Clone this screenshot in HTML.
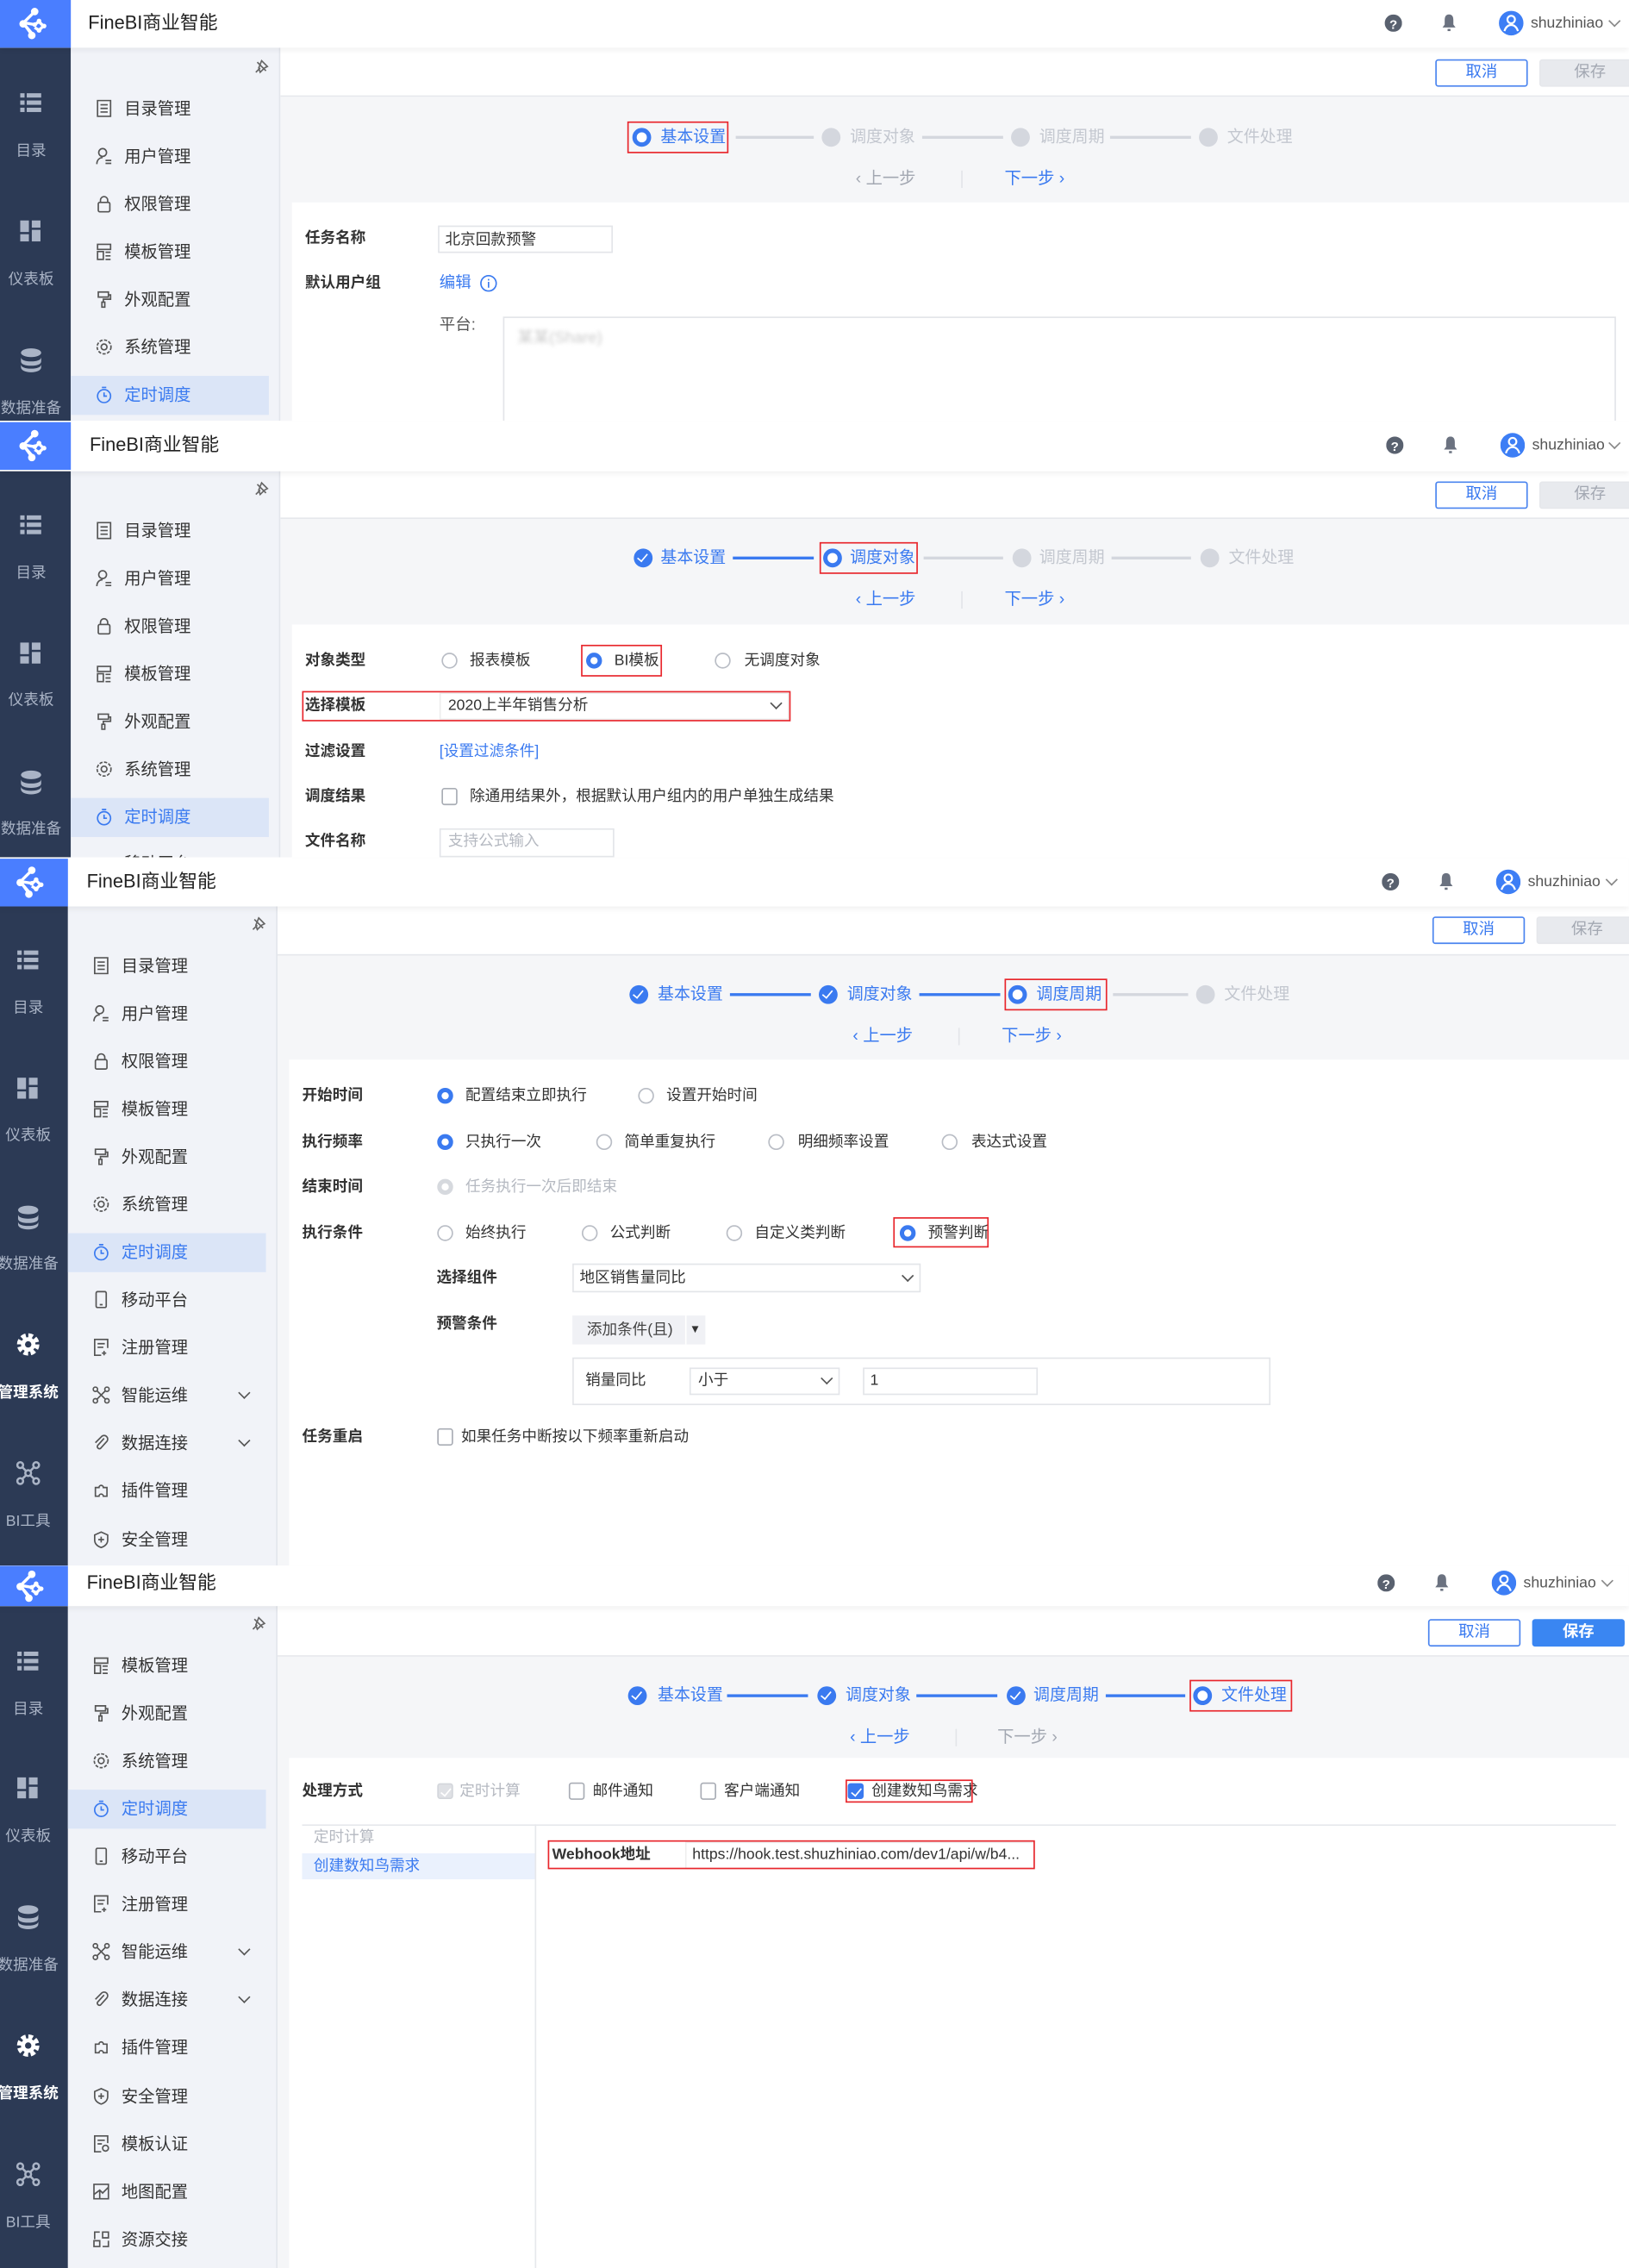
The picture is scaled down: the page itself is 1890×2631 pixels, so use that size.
<!DOCTYPE html>
<html><head><meta charset="utf-8">
<style>
*{margin:0;padding:0;box-sizing:border-box}
html,body{width:1890px;height:2630px;overflow:hidden;background:#fff}
body{font-family:"Liberation Sans","Noto Sans CJK SC",sans-serif;color:#333}
#w{position:absolute;left:0;top:0;width:1127px;height:1569px;transform:scale(1.677);transform-origin:0 0}
.p{position:absolute;left:0;width:1127px;overflow:hidden;background:#fff}
.in{position:absolute;left:0;top:0;width:1129px;height:100%}
.a{position:absolute}
.t{position:absolute;white-space:nowrap;font-size:11px;line-height:14px;transform:translateY(-50%)}
.ttl{font-size:13px !important}
.hd{position:absolute;left:0;top:0;width:100%;background:#fff;box-shadow:0 2px 4px rgba(0,0,0,.06);z-index:2}
.logo{position:absolute;left:0;top:0;width:49px;background:#4a7eff}
.dk{position:absolute;left:0;width:49px;bottom:0;background:#2c3a55}
.mn{position:absolute;left:49px;width:145px;bottom:0;background:#f1f3f8;border-right:1px solid #e3e6ec}
.tb{position:absolute;left:194px;right:0;background:#fff;border-bottom:1px solid #e6e8ec}
.sa{position:absolute;left:194px;right:0;bottom:0;background:#f5f6f8}
.fm{position:absolute;left:202px;right:0;bottom:0;background:#fff}
.dl{position:absolute;left:0;width:43px;text-align:center;font-size:10.5px;color:#aab4c6;transform:translateY(-50%);white-space:nowrap}
.dl.w{color:#fff;font-weight:bold}
.di{position:absolute;left:11.5px;width:19px;height:19px;transform:translateY(-50%)}
.mt{position:absolute;left:86px;font-size:11.5px;color:#333;transform:translateY(-50%);white-space:nowrap}
.mt.on{color:#3a7af0}
.mic{position:absolute;left:66px;width:12px;height:12px;transform:translateY(-50%)}
.act{position:absolute;left:49px;width:137px;height:27px;background:#dbe5f7}
.btn{position:absolute;height:19px;border:1px solid #4a84ef;color:#3a7af0;font-size:11px;text-align:center;line-height:17px;border-radius:2px}
.btn.g{border-color:#e5e7eb;background:#e8eaee;color:#a3a8b2}
.btn.b{background:#3a86f2;border-color:#3a86f2;color:#fff;font-weight:bold}
.sc{position:absolute;width:13px;height:13px;border-radius:50%;transform:translate(-50%,-50%)}
.sc.g{background:#d4d7de}
.sc.o{border:3.5px solid #3a7af0;background:#fff}
.sc.d{background:#3a7af0}
.sc.d:after{content:"";position:absolute;left:4px;top:2px;width:3px;height:6px;border:solid #fff;border-width:0 1.6px 1.6px 0;transform:rotate(40deg)}
.st{font-size:11.3px;color:#c3c7cf}
.st.b{color:#3a7af0}
.ln{position:absolute;height:2px;background:#d4d7de;transform:translateY(-50%)}
.ln.b{background:#3a7af0}
.nv{font-size:11.5px;color:#a3a8b2}
.nv.b{color:#3a7af0}
.sep{position:absolute;width:1px;height:12px;background:#e3e5e9;transform:translateY(-50%)}
.rb{position:absolute;border:1.5px solid #e8262c}
.lb{font-weight:bold;color:#333;font-size:10.5px}
.r{position:absolute;width:11px;height:11px;border:1px solid #b9bdc5;border-radius:50%;transform:translate(-50%,-50%);background:#fff}
.r.on{border:3px solid #3a7af0}
.r.dis{border:3px solid #d6d9de;background:#fff}
.cb{position:absolute;width:11px;height:11px;border:1px solid #a9adb5;border-radius:2px;transform:translate(-50%,-50%);background:#fff}
.cb.on{background:#3a7af0;border-color:#3a7af0}
.cb.dis{background:#dfe1e5;border-color:#d3d6db}
.cb.on:after,.cb.dis:after{content:"";position:absolute;left:3px;top:0.5px;width:3px;height:6px;border:solid #fff;border-width:0 1.5px 1.5px 0;transform:rotate(40deg)}
.ip{position:absolute;border:1px solid #e3e5e9;background:#fff}
.gy{color:#b5b9c1}
.bl{color:#3a7af0}
.chev{position:absolute;width:6px;height:6px;border:solid #555;border-width:0 1px 1px 0;transform:translate(-50%,-75%) rotate(45deg)}
</style></head><body><div id="w">

<!-- ============ PANEL 1 ============ -->
<div class="p" style="top:0;height:291px">
 <div class="hd" style="height:33px">
  <div class="logo" style="height:33px"><svg width="49" height="33" viewBox="0 0 49 33"><g stroke="#fff" stroke-width="2" fill="none"><path d="M22 10 L16 16 L22 23 M22 10 M19 13 L24 8"/><path d="M18 16 L24 17 L27 15 L30 18 L27 21 L24 19"/><path d="M17 17 L22 24"/></g><g fill="#fff"><circle cx="24" cy="8" r="2.6"/><circle cx="16" cy="16.5" r="2.6"/><circle cx="22" cy="24.5" r="2.6"/><circle cx="24" cy="17" r="1.6"/><circle cx="27" cy="14.5" r="1.6"/><circle cx="30.5" cy="18" r="1.6"/><circle cx="27" cy="21" r="1.6"/></g></svg></div>
  <div class="t ttl" style="left:61px;top:16px;color:#222">FineBI商业智能</div>
  <svg class="a" style="left:958px;top:10px" width="12" height="12"><circle cx="6" cy="6" r="6" fill="#59616f"/><text x="6" y="10" font-size="9" font-weight="bold" fill="#fff" text-anchor="middle" font-family="Liberation Sans">?</text></svg>
  <svg class="a" style="left:997px;top:9px" width="11" height="13"><path d="M5.5 1C3 1 2.5 3 2.5 5v3L1 10h9L8.5 8V5C8.5 3 8 1 5.5 1z" fill="#6b7280"/><rect x="4.5" y="11" width="2" height="1.5" fill="#6b7280"/></svg>
  <svg class="a" style="left:1037px;top:7px" width="17" height="18"><circle cx="8.5" cy="9" r="8.5" fill="#3d7ef5"/><circle cx="8.5" cy="6.5" r="2.6" stroke="#fff" stroke-width="1.3" fill="none"/><path d="M3.8 14.5c1-3 2.5-4.2 4.7-4.2s3.7 1.2 4.7 4.2" stroke="#fff" stroke-width="1.3" fill="none"/></svg>
  <div class="t" style="left:1059px;top:16px;font-size:10.5px;color:#555">shuzhiniao</div>
  <div class="chev" style="left:1117px;top:16px;border-color:#888"></div>
 </div>
 <div class="dk" style="top:33px"></div>
 <div class="mn" style="top:33px"></div>
 <div class="tb" style="top:33px;height:34px"></div>
 <div class="sa" style="top:67px"></div>
 <div class="fm" style="top:140px"></div>
 <svg class="di" style="top:71px" viewBox="0 0 19 19"><g fill="#aab4c6"><rect x="2" y="3" width="3" height="3"/><rect x="6.5" y="3" width="10" height="3"/><rect x="2" y="8" width="3" height="3"/><rect x="6.5" y="8" width="10" height="3"/><rect x="2" y="13" width="3" height="3"/><rect x="6.5" y="13" width="10" height="3"/></g></svg>
 <div class="dl" style="top:104px">目录</div>
 <svg class="di" style="top:160px" viewBox="0 0 19 19"><g fill="#aab4c6"><rect x="2" y="2" width="6" height="8"/><rect x="10" y="2" width="6" height="5"/><rect x="2" y="11.5" width="6" height="5"/><rect x="10" y="8.5" width="6" height="8"/></g></svg>
 <div class="dl" style="top:193px">仪表板</div>
 <svg class="di" style="top:249px" viewBox="0 0 19 19"><g fill="#aab4c6"><ellipse cx="9.5" cy="4.5" rx="7" ry="3"/><path d="M2.5 7.5c0 2 3 3 7 3s7-1 7-3v3c0 2-3 3-7 3s-7-1-7-3z"/><path d="M2.5 12.5c0 2 3 3 7 3s7-1 7-3v2c0 2-3 3.5-7 3.5s-7-1.5-7-3.5z"/></g></svg>
 <div class="dl" style="top:282px">数据准备</div>
 <svg class="a" style="left:174px;top:41px" width="12" height="12"><path d="M4 2l6 6M3 9l3-3M7 1l4 4-2 1-3 3-1-3z" stroke="#666" fill="none"/></svg>
 <svg class="mic" style="top:75px" viewBox="0 0 12 12"><rect x="1.5" y="0.5" width="9" height="11" fill="none" stroke="#555"/><path d="M3.5 3.5h5M3.5 6h5M3.5 8.5h5" stroke="#555"/></svg><div class="mt" style="top:75px">目录管理</div>
 <svg class="mic" style="top:108px" viewBox="0 0 12 12"><circle cx="5" cy="3.5" r="2.7" fill="none" stroke="#555"/><path d="M1 11.5c0-3 2-4.5 4-4.5M7 9h4M7 11h4" stroke="#555" fill="none"/></svg><div class="mt" style="top:108px">用户管理</div>
 <svg class="mic" style="top:141px" viewBox="0 0 12 12"><rect x="2" y="5" width="8" height="6.5" rx="1" fill="none" stroke="#555"/><path d="M3.5 5V3.5a2.5 2.5 0 015 0V5" fill="none" stroke="#555"/></svg><div class="mt" style="top:141px">权限管理</div>
 <svg class="mic" style="top:174px" viewBox="0 0 12 12"><path d="M1.5 1h9v3.5h-9zM1.5 6h4v5.5h-4zM7 6.5h3.5M7 9h3.5M7 11.5h3.5" fill="none" stroke="#555"/></svg><div class="mt" style="top:174px">模板管理</div>
 <svg class="mic" style="top:207px" viewBox="0 0 12 12"><path d="M2 1h7v3.5H2zM9 3h1.5v3H5.5v2M4.5 8h2v3.5h-2z" fill="none" stroke="#555"/></svg><div class="mt" style="top:207px">外观配置</div>
 <svg class="mic" style="top:240px" viewBox="0 0 12 12"><circle cx="6" cy="6" r="4.8" fill="none" stroke="#555" stroke-dasharray="2.2 1"/><circle cx="6" cy="6" r="2" fill="none" stroke="#555"/></svg><div class="mt" style="top:240px">系统管理</div>
 <div class="act" style="top:260px"></div>
 <svg class="mic" style="top:273px" viewBox="0 0 12 12"><circle cx="6" cy="7" r="4.5" fill="none" stroke="#3a7af0"/><path d="M4.5 1h3M6 4.5V7h2" fill="none" stroke="#3a7af0"/></svg><div class="mt on" style="top:273px">定时调度</div>
 <div class="btn" style="left:993px;top:41px;width:64px">取消</div>
 <div class="btn g" style="left:1065px;top:41px;width:70px">保存</div>
 <div class="sc o" style="left:444px;top:95px"></div><div class="t st b" style="left:457px;top:95px">基本设置</div>
 <div class="rb" style="left:434px;top:84px;width:70px;height:22px"></div>
 <div class="ln" style="left:509px;width:54px;top:95px"></div>
 <div class="sc g" style="left:575px;top:95px"></div><div class="t st" style="left:588px;top:95px">调度对象</div>
 <div class="ln" style="left:638px;width:56px;top:95px"></div>
 <div class="sc g" style="left:706px;top:95px"></div><div class="t st" style="left:719px;top:95px">调度周期</div>
 <div class="ln" style="left:768px;width:56px;top:95px"></div>
 <div class="sc g" style="left:836px;top:95px"></div><div class="t st" style="left:849px;top:95px">文件处理</div>
 <div class="t nv" style="left:592px;top:124px">‹ 上一步</div><div class="sep" style="left:665px;top:124px"></div><div class="t nv b" style="left:695px;top:124px">下一步 ›</div>
 <div class="t lb" style="left:211px;top:165px">任务名称</div>
 <div class="ip" style="left:303px;top:156px;width:121px;height:19px"></div><div class="t" style="left:308px;top:166px;font-size:10.5px">北京回款预警</div>
 <div class="t lb" style="left:211px;top:196px">默认用户组</div>
 <div class="t bl" style="left:304px;top:196px">编辑</div>
 <svg class="a" style="left:332px;top:190px" width="12" height="12"><circle cx="6" cy="6" r="5.3" fill="none" stroke="#3a7af0"/><path d="M6 5v4M6 3v1" stroke="#3a7af0"/></svg>
 <div class="t" style="left:304px;top:225px;color:#555">平台:</div>
 <div class="ip" style="left:348px;top:219px;width:770px;height:80px"></div>
 <div class="t" style="left:358px;top:234px;color:#ccc;filter:blur(1.2px)">某某(Share)</div>
</div>

<!-- ============ PANEL 2 ============ -->
<div class="p" style="top:291px;height:302px">
 <div class="hd" style="height:34px;top:1px">
  <div class="logo" style="height:33px"><svg width="49" height="33" viewBox="0 0 49 33"><g stroke="#fff" stroke-width="2" fill="none"><path d="M22 10 L16 16 L22 23 M19 13 L24 8"/><path d="M18 16 L24 17 L27 15 L30 18 L27 21 L24 19"/><path d="M17 17 L22 24"/></g><g fill="#fff"><circle cx="24" cy="8" r="2.6"/><circle cx="16" cy="16.5" r="2.6"/><circle cx="22" cy="24.5" r="2.6"/><circle cx="24" cy="17" r="1.6"/><circle cx="27" cy="14.5" r="1.6"/><circle cx="30.5" cy="18" r="1.6"/><circle cx="27" cy="21" r="1.6"/></g></svg></div>
  <div class="t ttl" style="left:62px;top:16px;color:#222">FineBI商业智能</div>
  <svg class="a" style="left:959px;top:10px" width="12" height="12"><circle cx="6" cy="6" r="6" fill="#59616f"/><text x="6" y="10" font-size="9" font-weight="bold" fill="#fff" text-anchor="middle" font-family="Liberation Sans">?</text></svg>
  <svg class="a" style="left:998px;top:9px" width="11" height="13"><path d="M5.5 1C3 1 2.5 3 2.5 5v3L1 10h9L8.5 8V5C8.5 3 8 1 5.5 1z" fill="#6b7280"/><rect x="4.5" y="11" width="2" height="1.5" fill="#6b7280"/></svg>
  <svg class="a" style="left:1038px;top:7px" width="17" height="18"><circle cx="8.5" cy="9" r="8.5" fill="#3d7ef5"/><circle cx="8.5" cy="6.5" r="2.6" stroke="#fff" stroke-width="1.3" fill="none"/><path d="M3.8 14.5c1-3 2.5-4.2 4.7-4.2s3.7 1.2 4.7 4.2" stroke="#fff" stroke-width="1.3" fill="none"/></svg>
  <div class="t" style="left:1060px;top:16px;font-size:10.5px;color:#555">shuzhiniao</div>
  <div class="chev" style="left:1117px;top:16px;border-color:#888"></div>
 </div>
 <div class="dk" style="top:34px"></div>
 <div class="mn" style="top:34px"></div>
 <div class="tb" style="top:34px;height:34px"></div>
 <div class="sa" style="top:68px"></div>
 <div class="fm" style="top:141px"></div>
 <svg class="di" style="top:72px" viewBox="0 0 19 19"><g fill="#aab4c6"><rect x="2" y="3" width="3" height="3"/><rect x="6.5" y="3" width="10" height="3"/><rect x="2" y="8" width="3" height="3"/><rect x="6.5" y="8" width="10" height="3"/><rect x="2" y="13" width="3" height="3"/><rect x="6.5" y="13" width="10" height="3"/></g></svg>
 <div class="dl" style="top:105px">目录</div>
 <svg class="di" style="top:161px" viewBox="0 0 19 19"><g fill="#aab4c6"><rect x="2" y="2" width="6" height="8"/><rect x="10" y="2" width="6" height="5"/><rect x="2" y="11.5" width="6" height="5"/><rect x="10" y="8.5" width="6" height="8"/></g></svg>
 <div class="dl" style="top:193px">仪表板</div>
 <svg class="di" style="top:250px" viewBox="0 0 19 19"><g fill="#aab4c6"><ellipse cx="9.5" cy="4.5" rx="7" ry="3"/><path d="M2.5 7.5c0 2 3 3 7 3s7-1 7-3v3c0 2-3 3-7 3s-7-1-7-3z"/><path d="M2.5 12.5c0 2 3 3 7 3s7-1 7-3v2c0 2-3 3.5-7 3.5s-7-1.5-7-3.5z"/></g></svg>
 <div class="dl" style="top:282px">数据准备</div>
 <svg class="a" style="left:174px;top:42px" width="12" height="12"><path d="M4 2l6 6M3 9l3-3M7 1l4 4-2 1-3 3-1-3z" stroke="#666" fill="none"/></svg>
 <svg class="mic" style="top:76px" viewBox="0 0 12 12"><rect x="1.5" y="0.5" width="9" height="11" fill="none" stroke="#555"/><path d="M3.5 3.5h5M3.5 6h5M3.5 8.5h5" stroke="#555"/></svg><div class="mt" style="top:76px">目录管理</div>
 <svg class="mic" style="top:109px" viewBox="0 0 12 12"><circle cx="5" cy="3.5" r="2.7" fill="none" stroke="#555"/><path d="M1 11.5c0-3 2-4.5 4-4.5M7 9h4M7 11h4" stroke="#555" fill="none"/></svg><div class="mt" style="top:109px">用户管理</div>
 <svg class="mic" style="top:142px" viewBox="0 0 12 12"><rect x="2" y="5" width="8" height="6.5" rx="1" fill="none" stroke="#555"/><path d="M3.5 5V3.5a2.5 2.5 0 015 0V5" fill="none" stroke="#555"/></svg><div class="mt" style="top:142px">权限管理</div>
 <svg class="mic" style="top:175px" viewBox="0 0 12 12"><path d="M1.5 1h9v3.5h-9zM1.5 6h4v5.5h-4zM7 6.5h3.5M7 9h3.5M7 11.5h3.5" fill="none" stroke="#555"/></svg><div class="mt" style="top:175px">模板管理</div>
 <svg class="mic" style="top:208px" viewBox="0 0 12 12"><path d="M2 1h7v3.5H2zM9 3h1.5v3H5.5v2M4.5 8h2v3.5h-2z" fill="none" stroke="#555"/></svg><div class="mt" style="top:208px">外观配置</div>
 <svg class="mic" style="top:241px" viewBox="0 0 12 12"><circle cx="6" cy="6" r="4.8" fill="none" stroke="#555" stroke-dasharray="2.2 1"/><circle cx="6" cy="6" r="2" fill="none" stroke="#555"/></svg><div class="mt" style="top:241px">系统管理</div>
 <div class="act" style="top:261px"></div>
 <svg class="mic" style="top:274px" viewBox="0 0 12 12"><circle cx="6" cy="7" r="4.5" fill="none" stroke="#3a7af0"/><path d="M4.5 1h3M6 4.5V7h2" fill="none" stroke="#3a7af0"/></svg><div class="mt on" style="top:274px">定时调度</div>
 <div class="mt" style="top:306px">移动平台</div>
 <div class="btn" style="left:993px;top:42px;width:64px">取消</div>
 <div class="btn g" style="left:1065px;top:42px;width:70px">保存</div>
 <div class="sc d" style="left:445px;top:95px"></div><div class="t st b" style="left:457px;top:95px">基本设置</div>
 <div class="ln b" style="left:507px;width:56px;top:95px"></div>
 <div class="sc o" style="left:576px;top:95px"></div><div class="t st b" style="left:588px;top:95px">调度对象</div>
 <div class="rb" style="left:567px;top:84px;width:68px;height:22px"></div>
 <div class="ln" style="left:639px;width:55px;top:95px"></div>
 <div class="sc g" style="left:707px;top:95px"></div><div class="t st" style="left:719px;top:95px">调度周期</div>
 <div class="ln" style="left:769px;width:55px;top:95px"></div>
 <div class="sc g" style="left:837px;top:95px"></div><div class="t st" style="left:850px;top:95px">文件处理</div>
 <div class="t nv b" style="left:592px;top:124px">‹ 上一步</div><div class="sep" style="left:665px;top:124px"></div><div class="t nv b" style="left:695px;top:124px">下一步 ›</div>
 <div class="t lb" style="left:211px;top:166px">对象类型</div>
 <div class="r" style="left:311px;top:166px"></div><div class="t" style="left:325px;top:166px;font-size:10.5px">报表模板</div>
 <div class="r on" style="left:411px;top:166px"></div><div class="t" style="left:425px;top:166px;font-size:10.5px">BI模板</div>
 <div class="rb" style="left:402px;top:155px;width:56px;height:22px"></div>
 <div class="r" style="left:500px;top:166px"></div><div class="t" style="left:515px;top:166px;font-size:10.5px">无调度对象</div>
 <div class="t lb" style="left:211px;top:197px">选择模板</div>
 <div class="ip" style="left:304px;top:188px;width:242px;height:19px;border-color:#eee"></div>
 <div class="t" style="left:310px;top:197px;font-size:10.5px">2020上半年销售分析</div>
 <div class="chev" style="left:537px;top:197px"></div>
 <div class="rb" style="left:209px;top:187px;width:338px;height:21px"></div>
 <div class="t lb" style="left:211px;top:229px">过滤设置</div>
 <div class="t bl" style="left:304px;top:229px;font-size:10.5px">[设置过滤条件]</div>
 <div class="t lb" style="left:211px;top:260px">调度结果</div>
 <div class="cb" style="left:311px;top:260px;width:11px;height:12px"></div>
 <div class="t" style="left:325px;top:260px;font-size:10.5px">除通用结果外，根据默认用户组内的用户单独生成结果</div>
 <div class="t lb" style="left:211px;top:291px">文件名称</div>
 <div class="ip" style="left:304px;top:282px;width:121px;height:20px"></div>
 <div class="t gy" style="left:310px;top:291px;font-size:10.5px">支持公式输入</div>
</div>

<!-- ============ PANEL 3 ============ -->
<div class="p" style="top:593px;height:490px"><div class="in" style="left:-2px">
 <div class="hd" style="height:33px;top:1px">
  <div class="logo" style="height:33px"><svg width="49" height="33" viewBox="0 0 49 33"><g stroke="#fff" stroke-width="2" fill="none"><path d="M22 10 L16 16 L22 23 M19 13 L24 8"/><path d="M18 16 L24 17 L27 15 L30 18 L27 21 L24 19"/><path d="M17 17 L22 24"/></g><g fill="#fff"><circle cx="24" cy="8" r="2.6"/><circle cx="16" cy="16.5" r="2.6"/><circle cx="22" cy="24.5" r="2.6"/><circle cx="24" cy="17" r="1.6"/><circle cx="27" cy="14.5" r="1.6"/><circle cx="30.5" cy="18" r="1.6"/><circle cx="27" cy="21" r="1.6"/></g></svg></div>
  <div class="t ttl" style="left:62px;top:16px;color:#222">FineBI商业智能</div>
  <svg class="a" style="left:958px;top:10px" width="12" height="12"><circle cx="6" cy="6" r="6" fill="#59616f"/><text x="6" y="10" font-size="9" font-weight="bold" fill="#fff" text-anchor="middle" font-family="Liberation Sans">?</text></svg>
  <svg class="a" style="left:997px;top:9px" width="11" height="13"><path d="M5.5 1C3 1 2.5 3 2.5 5v3L1 10h9L8.5 8V5C8.5 3 8 1 5.5 1z" fill="#6b7280"/><rect x="4.5" y="11" width="2" height="1.5" fill="#6b7280"/></svg>
  <svg class="a" style="left:1037px;top:7px" width="17" height="18"><circle cx="8.5" cy="9" r="8.5" fill="#3d7ef5"/><circle cx="8.5" cy="6.5" r="2.6" stroke="#fff" stroke-width="1.3" fill="none"/><path d="M3.8 14.5c1-3 2.5-4.2 4.7-4.2s3.7 1.2 4.7 4.2" stroke="#fff" stroke-width="1.3" fill="none"/></svg>
  <div class="t" style="left:1059px;top:16px;font-size:10.5px;color:#555">shuzhiniao</div>
  <div class="chev" style="left:1117px;top:16px;border-color:#888"></div>
 </div>
 <div class="dk" style="top:34px"></div>
 <div class="mn" style="top:34px"></div>
 <div class="tb" style="top:34px;height:34px"></div>
 <div class="sa" style="top:68px"></div>
 <div class="fm" style="top:140px"></div>
 <svg class="di" style="top:71px" viewBox="0 0 19 19"><g fill="#aab4c6"><rect x="2" y="3" width="3" height="3"/><rect x="6.5" y="3" width="10" height="3"/><rect x="2" y="8" width="3" height="3"/><rect x="6.5" y="8" width="10" height="3"/><rect x="2" y="13" width="3" height="3"/><rect x="6.5" y="13" width="10" height="3"/></g></svg>
 <div class="dl" style="top:104px">目录</div>
 <svg class="di" style="top:160px" viewBox="0 0 19 19"><g fill="#aab4c6"><rect x="2" y="2" width="6" height="8"/><rect x="10" y="2" width="6" height="5"/><rect x="2" y="11.5" width="6" height="5"/><rect x="10" y="8.5" width="6" height="8"/></g></svg>
 <div class="dl" style="top:192px">仪表板</div>
 <svg class="di" style="top:249px" viewBox="0 0 19 19"><g fill="#aab4c6"><ellipse cx="9.5" cy="4.5" rx="7" ry="3"/><path d="M2.5 7.5c0 2 3 3 7 3s7-1 7-3v3c0 2-3 3-7 3s-7-1-7-3z"/><path d="M2.5 12.5c0 2 3 3 7 3s7-1 7-3v2c0 2-3 3.5-7 3.5s-7-1.5-7-3.5z"/></g></svg>
 <div class="dl" style="top:281px">数据准备</div>
 <svg class="di" style="top:337px" viewBox="0 0 19 19"><circle cx="9.5" cy="9.5" r="6" fill="none" stroke="#fff" stroke-width="3.5" stroke-dasharray="3 1.7"/><circle cx="9.5" cy="9.5" r="5" fill="#fff"/><circle cx="9.5" cy="9.5" r="2.2" fill="#2c3a55"/></svg>
 <div class="dl w" style="top:370px">管理系统</div>
 <svg class="di" style="top:426px" viewBox="0 0 19 19"><g stroke="#aab4c6" stroke-width="1.5" fill="none"><circle cx="4" cy="4" r="2"/><circle cx="15" cy="4" r="2"/><circle cx="4" cy="15" r="2"/><circle cx="15" cy="15" r="2"/><circle cx="9.5" cy="9.5" r="2"/><path d="M5.5 5.5l2.5 2.5M13.5 5.5L11 8M5.5 13.5L8 11M13.5 13.5L11 11"/></g></svg>
 <div class="dl" style="top:459px">BI工具</div>
 <svg class="a" style="left:174px;top:41px" width="12" height="12"><path d="M4 2l6 6M3 9l3-3M7 1l4 4-2 1-3 3-1-3z" stroke="#666" fill="none"/></svg>
 <svg class="mic" style="top:75px" viewBox="0 0 12 12"><rect x="1.5" y="0.5" width="9" height="11" fill="none" stroke="#555"/><path d="M3.5 3.5h5M3.5 6h5M3.5 8.5h5" stroke="#555"/></svg><div class="mt" style="top:75px">目录管理</div>
 <svg class="mic" style="top:108px" viewBox="0 0 12 12"><circle cx="5" cy="3.5" r="2.7" fill="none" stroke="#555"/><path d="M1 11.5c0-3 2-4.5 4-4.5M7 9h4M7 11h4" stroke="#555" fill="none"/></svg><div class="mt" style="top:108px">用户管理</div>
 <svg class="mic" style="top:141px" viewBox="0 0 12 12"><rect x="2" y="5" width="8" height="6.5" rx="1" fill="none" stroke="#555"/><path d="M3.5 5V3.5a2.5 2.5 0 015 0V5" fill="none" stroke="#555"/></svg><div class="mt" style="top:141px">权限管理</div>
 <svg class="mic" style="top:174px" viewBox="0 0 12 12"><path d="M1.5 1h9v3.5h-9zM1.5 6h4v5.5h-4zM7 6.5h3.5M7 9h3.5M7 11.5h3.5" fill="none" stroke="#555"/></svg><div class="mt" style="top:174px">模板管理</div>
 <svg class="mic" style="top:207px" viewBox="0 0 12 12"><path d="M2 1h7v3.5H2zM9 3h1.5v3H5.5v2M4.5 8h2v3.5h-2z" fill="none" stroke="#555"/></svg><div class="mt" style="top:207px">外观配置</div>
 <svg class="mic" style="top:240px" viewBox="0 0 12 12"><circle cx="6" cy="6" r="4.8" fill="none" stroke="#555" stroke-dasharray="2.2 1"/><circle cx="6" cy="6" r="2" fill="none" stroke="#555"/></svg><div class="mt" style="top:240px">系统管理</div>
 <div class="act" style="top:260px"></div>
 <svg class="mic" style="top:273px" viewBox="0 0 12 12"><circle cx="6" cy="7" r="4.5" fill="none" stroke="#3a7af0"/><path d="M4.5 1h3M6 4.5V7h2" fill="none" stroke="#3a7af0"/></svg><div class="mt on" style="top:273px">定时调度</div>
 <svg class="mic" style="top:306px" viewBox="0 0 12 12"><rect x="2.5" y="0.5" width="7" height="11" rx="1" fill="none" stroke="#555"/><path d="M5 9.5h2" stroke="#555"/></svg><div class="mt" style="top:306px">移动平台</div>
 <svg class="mic" style="top:339px" viewBox="0 0 12 12"><path d="M6 11.5H1.5v-11h9v6M3.5 3.5h5M3.5 6h4M8 8.5v3M6.5 10h3" fill="none" stroke="#555"/></svg><div class="mt" style="top:339px">注册管理</div>
 <svg class="mic" style="top:372px" viewBox="0 0 12 12"><g fill="none" stroke="#555"><circle cx="2" cy="2" r="1.5"/><circle cx="10" cy="2" r="1.5"/><circle cx="2" cy="10" r="1.5"/><circle cx="10" cy="10" r="1.5"/><path d="M3 3l6 6M9 3L3 9"/></g></svg><div class="mt" style="top:372px">智能运维</div><div class="chev" style="left:171px;top:372px"></div>
 <svg class="mic" style="top:405px" viewBox="0 0 12 12"><path d="M8 3L3.5 8a1.5 1.5 0 002 2L10 5a2.5 2.5 0 00-3.5-3.5L2 6" fill="none" stroke="#555"/></svg><div class="mt" style="top:405px">数据连接</div><div class="chev" style="left:171px;top:405px"></div>
 <svg class="mic" style="top:438px" viewBox="0 0 12 12"><path d="M2 4h2.5a1.5 1.5 0 113 0H10v6H7.5a1.5 1.5 0 10-3 0H2z" fill="none" stroke="#555"/></svg><div class="mt" style="top:438px">插件管理</div>
 <svg class="mic" style="top:472px" viewBox="0 0 12 12"><path d="M6 0.8l4.5 2v3.5c0 3-2.5 4.5-4.5 5.2-2-.7-4.5-2.2-4.5-5.2V2.8zM6 4v4M4 6h4" fill="none" stroke="#555"/></svg><div class="mt" style="top:472px">安全管理</div>
 <div class="btn" style="left:993px;top:41px;width:64px">取消</div>
 <div class="btn g" style="left:1065px;top:41px;width:70px">保存</div>
 <div class="sc d" style="left:444px;top:95px"></div><div class="t st b" style="left:457px;top:95px">基本设置</div>
 <div class="ln b" style="left:507px;width:56px;top:95px"></div>
 <div class="sc d" style="left:575px;top:95px"></div><div class="t st b" style="left:588px;top:95px">调度对象</div>
 <div class="ln b" style="left:638px;width:56px;top:95px"></div>
 <div class="sc o" style="left:706px;top:95px"></div><div class="t st b" style="left:719px;top:95px">调度周期</div>
 <div class="rb" style="left:697px;top:84px;width:71px;height:22px"></div>
 <div class="ln" style="left:772px;width:52px;top:95px"></div>
 <div class="sc g" style="left:836px;top:95px"></div><div class="t st" style="left:849px;top:95px">文件处理</div>
 <div class="t nv b" style="left:592px;top:124px">‹ 上一步</div><div class="sep" style="left:665px;top:124px"></div><div class="t nv b" style="left:695px;top:124px">下一步 ›</div>
 <div class="t lb" style="left:211px;top:165px">开始时间</div>
 <div class="r on" style="left:310px;top:165px"></div><div class="t" style="left:324px;top:165px;font-size:10.5px">配置结束立即执行</div>
 <div class="r" style="left:449px;top:165px"></div><div class="t" style="left:463px;top:165px;font-size:10.5px">设置开始时间</div>
 <div class="t lb" style="left:211px;top:197px">执行频率</div>
 <div class="r on" style="left:310px;top:197px"></div><div class="t" style="left:324px;top:197px;font-size:10.5px">只执行一次</div>
 <div class="r" style="left:420px;top:197px"></div><div class="t" style="left:434px;top:197px;font-size:10.5px">简单重复执行</div>
 <div class="r" style="left:539px;top:197px"></div><div class="t" style="left:554px;top:197px;font-size:10.5px">明细频率设置</div>
 <div class="r" style="left:659px;top:197px"></div><div class="t" style="left:674px;top:197px;font-size:10.5px">表达式设置</div>
 <div class="t lb" style="left:211px;top:228px">结束时间</div>
 <div class="r dis" style="left:310px;top:228px"></div><div class="t gy" style="left:324px;top:228px;font-size:10.5px">任务执行一次后即结束</div>
 <div class="t lb" style="left:211px;top:260px">执行条件</div>
 <div class="r" style="left:310px;top:260px"></div><div class="t" style="left:324px;top:260px;font-size:10.5px">始终执行</div>
 <div class="r" style="left:410px;top:260px"></div><div class="t" style="left:424px;top:260px;font-size:10.5px">公式判断</div>
 <div class="r" style="left:510px;top:260px"></div><div class="t" style="left:524px;top:260px;font-size:10.5px">自定义类判断</div>
 <div class="r on" style="left:630px;top:260px"></div><div class="t" style="left:644px;top:260px;font-size:10.5px">预警判断</div>
 <div class="rb" style="left:620px;top:249px;width:66px;height:21px"></div>
 <div class="t lb" style="left:304px;top:291px">选择组件</div>
 <div class="ip" style="left:398px;top:281px;width:241px;height:20px"></div>
 <div class="t" style="left:403px;top:291px;font-size:10.5px">地区销售量同比</div><div class="chev" style="left:630px;top:291px"></div>
 <div class="t lb" style="left:304px;top:323px">预警条件</div>
 <div class="a" style="left:398px;top:317px;width:78px;height:20px;background:#f0f1f5"></div>
 <div class="a" style="left:476px;top:317px;width:14px;height:20px;background:#f0f1f5;border-left:1px solid #fff"></div>
 <div class="t" style="left:408px;top:327px;font-size:10.5px;color:#444">添加条件(且)</div>
 <div class="t" style="left:479px;top:327px;font-size:8px;color:#333">▼</div>
 <div class="ip" style="left:398px;top:346px;width:483px;height:33px"></div>
 <div class="t" style="left:407px;top:362px;font-size:10.5px">销量同比</div>
 <div class="ip" style="left:479px;top:353px;width:104px;height:19px"></div>
 <div class="t" style="left:485px;top:362px;font-size:10.5px">小于</div><div class="chev" style="left:574px;top:362px"></div>
 <div class="ip" style="left:599px;top:353px;width:121px;height:19px"></div>
 <div class="t" style="left:604px;top:362px;font-size:10.5px">1</div>
 <div class="t lb" style="left:211px;top:401px">任务重启</div>
 <div class="cb" style="left:310px;top:401px;width:11px;height:12px"></div>
 <div class="t" style="left:321px;top:401px;font-size:10.5px">如果任务中断按以下频率重新启动</div>
</div></div>

<!-- ============ PANEL 4 ============ -->
<div class="p" style="top:1083px;height:486px"><div class="in" style="left:-2px">
 <div class="hd" style="height:28px;top:0">
  <div class="logo" style="height:28px"><svg width="49" height="28" viewBox="0 2 49 28"><g stroke="#fff" stroke-width="2" fill="none"><path d="M22 10 L16 16 L22 23 M19 13 L24 8"/><path d="M18 16 L24 17 L27 15 L30 18 L27 21 L24 19"/><path d="M17 17 L22 24"/></g><g fill="#fff"><circle cx="24" cy="8" r="2.6"/><circle cx="16" cy="16.5" r="2.6"/><circle cx="22" cy="24.5" r="2.6"/><circle cx="24" cy="17" r="1.6"/><circle cx="27" cy="14.5" r="1.6"/><circle cx="30.5" cy="18" r="1.6"/><circle cx="27" cy="21" r="1.6"/></g></svg></div>
  <div class="t ttl" style="left:62px;top:12px;color:#222">FineBI商业智能</div>
  <svg class="a" style="left:955px;top:6px" width="12" height="12"><circle cx="6" cy="6" r="6" fill="#59616f"/><text x="6" y="10" font-size="9" font-weight="bold" fill="#fff" text-anchor="middle" font-family="Liberation Sans">?</text></svg>
  <svg class="a" style="left:994px;top:5px" width="11" height="13"><path d="M5.5 1C3 1 2.5 3 2.5 5v3L1 10h9L8.5 8V5C8.5 3 8 1 5.5 1z" fill="#6b7280"/><rect x="4.5" y="11" width="2" height="1.5" fill="#6b7280"/></svg>
  <svg class="a" style="left:1034px;top:3px" width="17" height="18"><circle cx="8.5" cy="9" r="8.5" fill="#3d7ef5"/><circle cx="8.5" cy="6.5" r="2.6" stroke="#fff" stroke-width="1.3" fill="none"/><path d="M3.8 14.5c1-3 2.5-4.2 4.7-4.2s3.7 1.2 4.7 4.2" stroke="#fff" stroke-width="1.3" fill="none"/></svg>
  <div class="t" style="left:1056px;top:12px;font-size:10.5px;color:#555">shuzhiniao</div>
  <div class="chev" style="left:1114px;top:12px;border-color:#888"></div>
 </div>
 <div class="dk" style="top:28px"></div>
 <div class="mn" style="top:28px"></div>
 <div class="tb" style="top:28px;height:35px"></div>
 <div class="sa" style="top:63px"></div>
 <div class="fm" style="top:133px"></div>
 <svg class="di" style="top:66px" viewBox="0 0 19 19"><g fill="#aab4c6"><rect x="2" y="3" width="3" height="3"/><rect x="6.5" y="3" width="10" height="3"/><rect x="2" y="8" width="3" height="3"/><rect x="6.5" y="8" width="10" height="3"/><rect x="2" y="13" width="3" height="3"/><rect x="6.5" y="13" width="10" height="3"/></g></svg>
 <div class="dl" style="top:99px">目录</div>
 <svg class="di" style="top:154px" viewBox="0 0 19 19"><g fill="#aab4c6"><rect x="2" y="2" width="6" height="8"/><rect x="10" y="2" width="6" height="5"/><rect x="2" y="11.5" width="6" height="5"/><rect x="10" y="8.5" width="6" height="8"/></g></svg>
 <div class="dl" style="top:187px">仪表板</div>
 <svg class="di" style="top:243px" viewBox="0 0 19 19"><g fill="#aab4c6"><ellipse cx="9.5" cy="4.5" rx="7" ry="3"/><path d="M2.5 7.5c0 2 3 3 7 3s7-1 7-3v3c0 2-3 3-7 3s-7-1-7-3z"/><path d="M2.5 12.5c0 2 3 3 7 3s7-1 7-3v2c0 2-3 3.5-7 3.5s-7-1.5-7-3.5z"/></g></svg>
 <div class="dl" style="top:276px">数据准备</div>
 <svg class="di" style="top:332px" viewBox="0 0 19 19"><circle cx="9.5" cy="9.5" r="6" fill="none" stroke="#fff" stroke-width="3.5" stroke-dasharray="3 1.7"/><circle cx="9.5" cy="9.5" r="5" fill="#fff"/><circle cx="9.5" cy="9.5" r="2.2" fill="#2c3a55"/></svg>
 <div class="dl w" style="top:365px">管理系统</div>
 <svg class="di" style="top:421px" viewBox="0 0 19 19"><g stroke="#aab4c6" stroke-width="1.5" fill="none"><circle cx="4" cy="4" r="2"/><circle cx="15" cy="4" r="2"/><circle cx="4" cy="15" r="2"/><circle cx="15" cy="15" r="2"/><circle cx="9.5" cy="9.5" r="2"/><path d="M5.5 5.5l2.5 2.5M13.5 5.5L11 8M5.5 13.5L8 11M13.5 13.5L11 11"/></g></svg>
 <div class="dl" style="top:454px">BI工具</div>
 <svg class="a" style="left:174px;top:35px" width="12" height="12"><path d="M4 2l6 6M3 9l3-3M7 1l4 4-2 1-3 3-1-3z" stroke="#666" fill="none"/></svg>
 <svg class="mic" style="top:69px" viewBox="0 0 12 12"><path d="M1.5 1h9v3.5h-9zM1.5 6h4v5.5h-4zM7 6.5h3.5M7 9h3.5M7 11.5h3.5" fill="none" stroke="#555"/></svg><div class="mt" style="top:69px">模板管理</div>
 <svg class="mic" style="top:102px" viewBox="0 0 12 12"><path d="M2 1h7v3.5H2zM9 3h1.5v3H5.5v2M4.5 8h2v3.5h-2z" fill="none" stroke="#555"/></svg><div class="mt" style="top:102px">外观配置</div>
 <svg class="mic" style="top:135px" viewBox="0 0 12 12"><circle cx="6" cy="6" r="4.8" fill="none" stroke="#555" stroke-dasharray="2.2 1"/><circle cx="6" cy="6" r="2" fill="none" stroke="#555"/></svg><div class="mt" style="top:135px">系统管理</div>
 <div class="act" style="top:155px"></div>
 <svg class="mic" style="top:168px" viewBox="0 0 12 12"><circle cx="6" cy="7" r="4.5" fill="none" stroke="#3a7af0"/><path d="M4.5 1h3M6 4.5V7h2" fill="none" stroke="#3a7af0"/></svg><div class="mt on" style="top:168px">定时调度</div>
 <svg class="mic" style="top:201px" viewBox="0 0 12 12"><rect x="2.5" y="0.5" width="7" height="11" rx="1" fill="none" stroke="#555"/><path d="M5 9.5h2" stroke="#555"/></svg><div class="mt" style="top:201px">移动平台</div>
 <svg class="mic" style="top:234px" viewBox="0 0 12 12"><path d="M6 11.5H1.5v-11h9v6M3.5 3.5h5M3.5 6h4M8 8.5v3M6.5 10h3" fill="none" stroke="#555"/></svg><div class="mt" style="top:234px">注册管理</div>
 <svg class="mic" style="top:267px" viewBox="0 0 12 12"><g fill="none" stroke="#555"><circle cx="2" cy="2" r="1.5"/><circle cx="10" cy="2" r="1.5"/><circle cx="2" cy="10" r="1.5"/><circle cx="10" cy="10" r="1.5"/><path d="M3 3l6 6M9 3L3 9"/></g></svg><div class="mt" style="top:267px">智能运维</div><div class="chev" style="left:171px;top:267px"></div>
 <svg class="mic" style="top:300px" viewBox="0 0 12 12"><path d="M8 3L3.5 8a1.5 1.5 0 002 2L10 5a2.5 2.5 0 00-3.5-3.5L2 6" fill="none" stroke="#555"/></svg><div class="mt" style="top:300px">数据连接</div><div class="chev" style="left:171px;top:300px"></div>
 <svg class="mic" style="top:333px" viewBox="0 0 12 12"><path d="M2 4h2.5a1.5 1.5 0 113 0H10v6H7.5a1.5 1.5 0 10-3 0H2z" fill="none" stroke="#555"/></svg><div class="mt" style="top:333px">插件管理</div>
 <svg class="mic" style="top:367px" viewBox="0 0 12 12"><path d="M6 0.8l4.5 2v3.5c0 3-2.5 4.5-4.5 5.2-2-.7-4.5-2.2-4.5-5.2V2.8zM6 4v4M4 6h4" fill="none" stroke="#555"/></svg><div class="mt" style="top:367px">安全管理</div>
 <svg class="mic" style="top:400px" viewBox="0 0 12 12"><path d="M6 11.5H1.5v-11h9v5M3.5 3.5h5M3.5 6h3" fill="none" stroke="#555"/><circle cx="9" cy="9" r="2" fill="none" stroke="#555"/></svg><div class="mt" style="top:400px">模板认证</div>
 <svg class="mic" style="top:433px" viewBox="0 0 12 12"><path d="M1 1h10v10H1zM1 8l4-3 2 2 4-4M5 5v6" fill="none" stroke="#555"/></svg><div class="mt" style="top:433px">地图配置</div>
 <svg class="mic" style="top:466px" viewBox="0 0 12 12"><path d="M5 1H1.5v5M7 1h4v4h-4zM1 7h4v4H1zM11 7v4H7" fill="none" stroke="#555"/></svg><div class="mt" style="top:466px">资源交接</div>
 <div class="btn" style="left:990px;top:37px;width:64px">取消</div>
 <div class="btn b" style="left:1062px;top:37px;width:64px">保存</div>
 <div class="sc d" style="left:443px;top:90px"></div><div class="t st b" style="left:457px;top:90px">基本设置</div>
 <div class="ln b" style="left:505px;width:56px;top:90px"></div>
 <div class="sc d" style="left:574px;top:90px"></div><div class="t st b" style="left:587px;top:90px">调度对象</div>
 <div class="ln b" style="left:636px;width:56px;top:90px"></div>
 <div class="sc d" style="left:705px;top:90px"></div><div class="t st b" style="left:717px;top:90px">调度周期</div>
 <div class="ln b" style="left:767px;width:55px;top:90px"></div>
 <div class="sc o" style="left:834px;top:90px"></div><div class="t st b" style="left:847px;top:90px">文件处理</div>
 <div class="rb" style="left:825px;top:79px;width:71px;height:22px"></div>
 <div class="t nv b" style="left:590px;top:119px">‹ 上一步</div><div class="sep" style="left:663px;top:119px"></div><div class="t nv" style="left:692px;top:119px">下一步 ›</div>
 <div class="t lb" style="left:211px;top:156px">处理方式</div>
 <div class="cb dis" style="left:310px;top:156px"></div><div class="t gy" style="left:320px;top:156px;font-size:10.5px">定时计算</div>
 <div class="cb" style="left:401px;top:156px;width:11px;height:12px"></div><div class="t" style="left:412px;top:156px;font-size:10.5px">邮件通知</div>
 <div class="cb" style="left:492px;top:156px;width:11px;height:12px"></div><div class="t" style="left:503px;top:156px;font-size:10.5px">客户端通知</div>
 <div class="cb on" style="left:594px;top:156px"></div><div class="t" style="left:605px;top:156px;font-size:10.5px">创建数知鸟需求</div>
 <div class="rb" style="left:587px;top:148px;width:88px;height:16px"></div>
 <div class="a" style="left:211px;top:179px;width:909px;height:1px;background:#e6e8ec"></div>
 <div class="a" style="left:372px;top:179px;width:1px;height:320px;background:#e6e8ec"></div>
 <div class="t gy" style="left:219px;top:188px;font-size:10.5px">定时计算</div>
 <div class="a" style="left:211px;top:199px;width:161px;height:18px;background:#eaf1fd"></div>
 <div class="t bl" style="left:219px;top:208px;font-size:10.5px">创建数知鸟需求</div>
 <div class="ip" style="left:476px;top:191px;width:242px;height:19px;border-color:#eee"></div>
 <div class="rb" style="left:381px;top:190px;width:337px;height:20px"></div>
 <div class="t lb" style="left:384px;top:200px">Webhook地址</div>
 <div class="t" style="left:481px;top:200px;font-size:10.5px">https://hook.test.shuzhiniao.com/dev1/api/w/b4...</div>
</div></div>

</div></body></html>
